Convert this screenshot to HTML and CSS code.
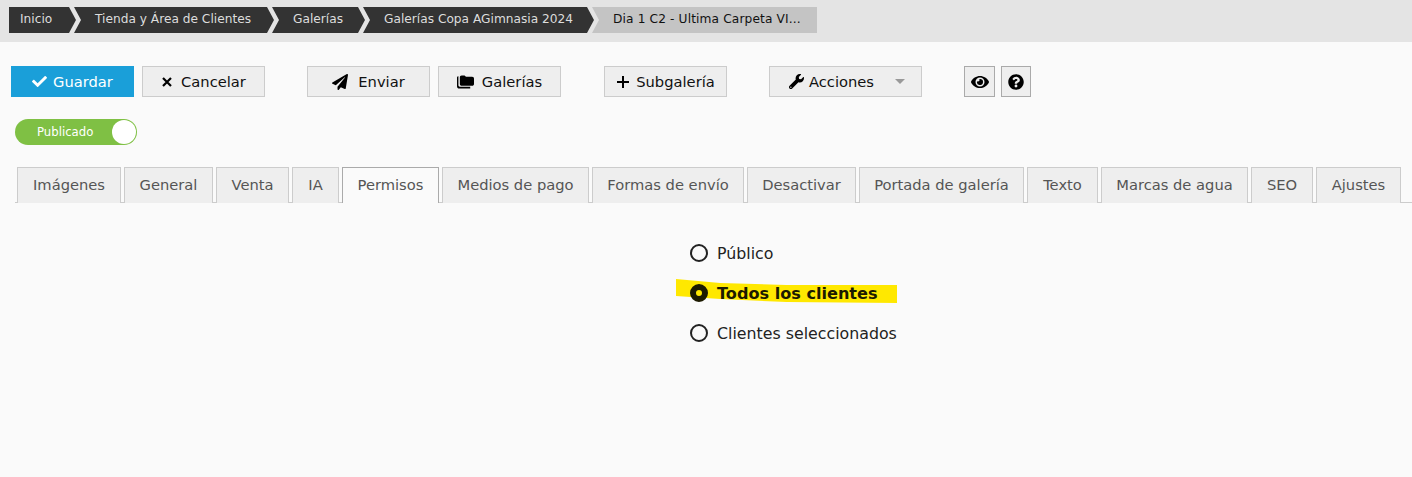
FILE: index.html
```html
<!DOCTYPE html>
<html lang="es">
<head>
<meta charset="utf-8">
<title>Permisos</title>
<link rel="stylesheet" href="styles.css">
</head>
<body>
<nav class="crumbs">
  <a class="crumb first">Inicio</a>
  <a class="crumb c2">Tienda y Área de Clientes</a>
  <a class="crumb c3">Galerías</a>
  <a class="crumb c4">Galerías Copa AGimnasia 2024</a>
  <a class="crumb current">Dia 1 C2 - Ultima Carpeta VI...</a>
</nav>
<div class="toolbar">
  <button class="btn primary"><svg class="ic save" viewBox="0 0 512 512"><path d="M173.898 439.404l-166.4-166.4c-9.997-9.997-9.997-26.206 0-36.204l36.203-36.204c9.997-9.998 26.207-9.998 36.204 0L192 312.69 432.095 72.596c9.997-9.997 26.207-9.997 36.204 0l36.203 36.204c9.997 9.997 9.997 26.206 0 36.204l-294.4 294.401c-9.998 9.997-26.207 9.997-36.204-.001z"/></svg>Guardar</button>
  <button class="btn"><svg class="ic cross" viewBox="0 0 12 12"><path d="M2 2l8 8M10 2l-8 8" stroke="#000" stroke-width="2.2" fill="none"/></svg>Cancelar</button>
  <button class="btn gap-a"><svg class="ic send" viewBox="0 0 512 512"><path d="M476 3.2L12.5 270.6c-18.1 10.4-15.8 35.6 2.2 43.2L121 358.4l287.3-253.2c5.5-4.9 13.3 2.6 8.6 8.3L176 407v80.5c0 23.6 28.5 32.9 42.5 15.8L282 426l124.6 52.2c14.2 6 30.4-2.9 33-18.2l72-432C515 7.8 493.3-6.8 476 3.2z"/></svg>Enviar</button>
  <button class="btn"><svg class="ic folder" viewBox="0 0 18 14"><path d="M0 2.500C0 1.600.6 1 1.500 1v9.500c0 1 .6 1.500 1.500 1.500h11v2H2.500C1 14 0 13 0 11.500z"/><path d="M3 2c0-1 .6-2 2-2h3l1.500 1.500H16c1.200 0 2 .8 2 2V9c0 1-.8 2-2 2H5c-1.200 0-2-.8-2-2z"/></svg>Galerías</button>
  <button class="btn gap-b"><svg class="ic plus" viewBox="0 0 14 14"><path d="M7 1v12M1 7h12" stroke="#000" stroke-width="2" fill="none"/></svg>Subgalería</button>
  <button class="btn actions gap-c"><svg class="ic" viewBox="0 0 512 512"><path d="M507.730 109.100c-2.240-9.030-13.540-12.090-20.120-5.510l-74.360 74.360-67.880-11.310-11.310-67.880 74.360-74.360c6.620-6.620 3.430-17.900-5.660-20.160-47.380-11.740-99.550.91-136.580 37.930-39.640 39.640-50.550 97.100-34.050 147.200L18.740 402.760c-24.990 24.990-24.990 65.510 0 90.500 24.990 24.990 65.510 24.990 90.500 0l213.210-213.210c50.120 16.710 107.470 5.680 147.370-34.220 37.070-37.070 49.700-89.320 37.910-136.730zM64 472c-13.250 0-24-10.750-24-24 0-13.260 10.750-24 24-24s24 10.740 24 24c0 13.250-10.750 24-24 24z"/></svg>Acciones<i class="caret"></i></button>
  <button class="icon-btn gap-c"><svg class="eye" viewBox="0 0 576 512"><path d="M572.52 241.4C518.29 135.59 410.93 64 288 64S57.68 135.64 3.48 241.41a32.35 32.35 0 0 0 0 29.19C57.71 376.41 165.07 448 288 448s230.32-71.64 284.52-177.41a32.35 32.35 0 0 0 0-29.19zM288 400a144 144 0 1 1 144-144 143.93 143.93 0 0 1-144 144zm0-240a95.31 95.31 0 0 0-25.31 3.79 47.85 47.85 0 0 1-66.9 66.9A95.78 95.78 0 1 0 288 160z"/></svg></button>
  <button class="icon-btn help"><svg class="q" viewBox="0 0 512 512"><path d="M504 256c0 136.997-111.043 248-248 248S8 392.997 8 256C8 119.083 119.043 8 256 8s248 111.083 248 248zM262.655 90c-54.497 0-89.255 22.957-116.549 63.758-3.536 5.286-2.353 12.415 2.715 16.258l34.699 26.31c5.205 3.947 12.621 3.008 16.665-2.122 17.864-22.658 30.113-35.797 57.303-35.797 20.429 0 45.698 13.148 45.698 32.958 0 14.976-12.363 22.667-32.534 33.976C247.128 238.528 216 254.941 216 296v4c0 6.627 5.373 12 12 12h56c6.627 0 12-5.373 12-12v-1.333c0-28.462 83.186-29.647 83.186-106.667 0-58.002-60.165-102-116.531-102zM256 338c-25.365 0-46 20.635-46 46 0 25.364 20.635 46 46 46s46-20.636 46-46c0-25.365-20.635-46-46-46z"/></svg></button>
</div>
<div class="toggle"><span>Publicado</span><i class="knob"></i></div>
<div class="tabs">
  <a class="tab">Imágenes</a>
  <a class="tab">General</a>
  <a class="tab">Venta</a>
  <a class="tab">IA</a>
  <a class="tab active">Permisos</a>
  <a class="tab">Medios de pago</a>
  <a class="tab">Formas de envío</a>
  <a class="tab">Desactivar</a>
  <a class="tab">Portada de galería</a>
  <a class="tab">Texto</a>
  <a class="tab">Marcas de agua</a>
  <a class="tab">SEO</a>
  <a class="tab">Ajustes</a>
</div>
<div class="options">
  <label class="opt"><i class="radio"></i>Público</label>
  <label class="opt on"><b class="mark"></b><i class="radio checked"></i><strong>Todos los clientes</strong></label>
  <label class="opt"><i class="radio"></i>Clientes seleccionados</label>
</div>
</body>
</html>
```
FILE: styles.css
```css
* { box-sizing: border-box; }
html, body { margin: 0; }
body {
  height: 477px;
  overflow: hidden;
  background: #fafafa;
  color: #111;
  font-family: "DejaVu Sans", sans-serif;
}
.crumbs {
  display: flex;
  height: 42px;
  padding: 7px 0 0 9px;
  background: #e4e4e4;
  font-size: 12.200px;
}
.crumb {
  flex: none;
  height: 26px;
  line-height: 25px;
  padding-left: 21px;
  margin-left: -2px;
  background: #333;
  color: #ddd;
  white-space: nowrap;
  clip-path: polygon(0 0, calc(100% - 7px) 0, 100% 50%, calc(100% - 7px) 100%, 0 100%, 7px 50%);
}
.crumb.first {
  width: 67px;
  margin-left: 0;
  padding-left: 11px;
  clip-path: polygon(0 0, calc(100% - 7px) 0, 100% 50%, calc(100% - 7px) 100%, 0 100%);
}
.c2 { width: 200px; }
.c3 { width: 93px; }
.c4 { width: 231px; }
.crumb.current {
  width: 225px;
  background: #c4c4c4;
  color: #111;
  letter-spacing: .13px;
  clip-path: polygon(0 0, 100% 0, 100% 100%, 0 100%, 7px 50%);
}
.toolbar {
  display: flex;
  padding: 24px 0 0 11px;
  gap: 8px;
}
.btn {
  display: flex;
  align-items: center;
  justify-content: center;
  width: 123px;
  height: 31px;
  padding: 0;
  border: 1px solid #ccc;
  background: #eee;
  color: #111;
  font: 14.700px "DejaVu Sans", sans-serif;
}
.btn.primary { background: #1a9fd9; border-color: #1a9fd9; color: #fff; }
.btn.primary .ic { fill: #fff; }
.gap-a { margin-left: 34px; }
.gap-b { margin-left: 35px; }
.gap-c { margin-left: 34px; }
.ic { flex: none; width: 15px; height: 15px; margin-right: 5px; fill: #000; }
.ic.save { margin-right: 6px; }
.ic.cross { width: 12px; height: 12px; margin-right: 8px; }
.ic.plus { width: 14px; height: 14px; margin-right: 6px; }
.ic.send { width: 16px; height: 16px; margin-right: 10px; }
.ic.folder { width: 17px; height: 14px; margin-right: 8px; }
.actions { width: 153px; justify-content: flex-start; padding-left: 19px; }
.caret {
  width: 0;
  height: 0;
  margin-left: 21px;
  border: 5px solid transparent;
  border-top: 5px solid #999;
  border-bottom: 0;
}
.icon-btn {
  display: flex;
  align-items: center;
  justify-content: center;
  width: 31px;
  height: 31px;
  padding: 0;
  border: 1px solid #aaa;
  background: #eee;
}
.icon-btn.help { width: 30px; margin-left: -2px; }
.eye { width: 18px; height: 16px; }
.q { width: 16px; height: 16px; }
.toggle {
  display: flex;
  align-items: center;
  justify-content: space-between;
  width: 122px;
  height: 26px;
  margin: 22px 0 0 15px;
  padding: 0 1px 0 22px;
  border-radius: 13px;
  background: #7fc044;
  color: #fff;
  font-size: 11.700px;
}
.knob {
  width: 24px;
  height: 24px;
  border-radius: 50%;
  background: #fff;
}
.tabs {
  display: grid;
  grid-template-columns: 104px 89px 73px 47px 97px 147px 152px 109px 165px 71px 147px 62px 85px;
  gap: 3px;
  height: 36px;
  margin: 22px 0 0 15px;
  padding-left: 2px;
  border-bottom: 1px solid #ccc;
}
.tab {
  height: 36px;
  line-height: 34px;
  text-align: center;
  border: 1px solid #ccc;
  border-bottom: 0;
  background: #eee;
  color: #555;
  font-size: 14.700px;
  white-space: nowrap;
}
.tab.active {
  background: #fafafa;
  border-color: #aaa;
}
.options {
  display: flex;
  flex-direction: column;
  gap: 16px;
  margin: 38px 0 0 690px;
  font-size: 15.800px;
  color: #222;
}
.opt {
  position: relative;
  display: flex;
  align-items: center;
  height: 24px;
}
.radio {
  position: relative;
  flex: none;
  width: 18px;
  height: 18px;
  margin-right: 9px;
  border: 2px solid #222;
  border-radius: 50%;
  background: #fafafa;
}
.radio.checked {
  background: #ffe800;
  border: 6px solid #1c1a00;
}
.opt strong { position: relative; color: #1c1a00; font-size: 16.100px; }
.mark {
  position: absolute;
  left: -14px;
  top: -2px;
  width: 221px;
  height: 24px;
  background: #ffe800;
  clip-path: polygon(0 0, 20% 4px, 50% 6px, 100% 6px, 100% 100%, 50% 23px, 20% 20px, 0 17px);
}
```
